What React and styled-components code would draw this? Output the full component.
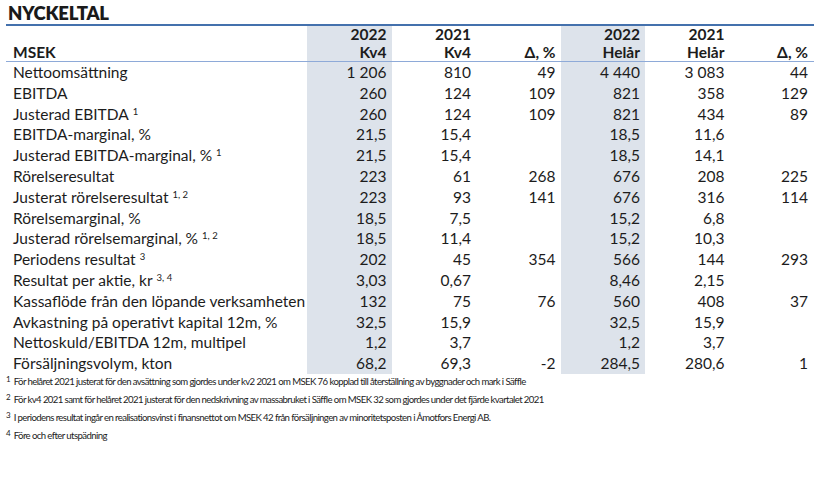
import React from "react";
import styled, { createGlobalStyle } from "styled-components";

const GlobalStyle = createGlobalStyle`
  html, body {
    margin: 0;
    padding: 0;
    background: #ffffff;
  }
  body {
    font-family: Lato, "Liberation Sans", sans-serif;
    color: #1c1c1c;
  }
`;

const Page = styled.div`
  width: 820px;
  height: 489px;
  padding: 3px 6px 0 6px;
  box-sizing: border-box;
`;

const Title = styled.h1`
  margin: 0 0 0 2px;
  font-size: 18.5px;
  font-weight: 800;
  line-height: 21px;
  letter-spacing: -0.2px;
  color: #1a1a1a;
`;

const Table = styled.table`
  width: 808px;
  border-collapse: collapse;
  table-layout: fixed;
  border-top: 2px solid #4471ad;
  font-size: 15.5px;
`;

const HeadCell = styled.th`
  padding: 0 ${(p) => (p.$last ? "6px" : "5px")} 0 ${(p) => (p.$label ? "7px" : "0")};
  height: ${(p) => (p.$bottom ? "18px" : "17px")};
  line-height: ${(p) => (p.$bottom ? "18px" : "17px")};
  vertical-align: ${(p) => (p.$bottom ? "top" : "bottom")};
  font-weight: 700;
  text-align: ${(p) => (p.$label ? "left" : "right")};
  background: ${(p) => (p.$shade ? "#dde3eb" : "transparent")};
  border-bottom: ${(p) => (p.$bottom ? "1px solid #8eaad8" : "none")};
  white-space: nowrap;
`;

const Cell = styled.td`
  padding: 0 ${(p) => (p.$last ? "6px" : "5px")} 0 ${(p) => (p.$label ? "7px" : "0")};
  height: 20.8px;
  line-height: 20.8px;
  text-align: ${(p) => (p.$label ? "left" : "right")};
  background: ${(p) => (p.$shade ? "#dde3eb" : "transparent")};
  white-space: nowrap;
`;

const Sup = styled.span`
  position: relative;
  top: -5px;
  font-size: 9.5px;
  line-height: 0;
  margin-left: 4px;
`;

const Notes = styled.div`
  margin-top: -1px;
  font-size: 9.6px;
  letter-spacing: -0.6px;
  color: #222;
`;

const Note = styled.div`
  height: 18px;
  line-height: 18px;
  white-space: nowrap;
`;

const NoteMark = styled.span`
  position: relative;
  top: -3px;
  font-size: 8px;
  line-height: 0;
  letter-spacing: 0;
  margin-right: 3px;
`;

const rows = [
  ["Nettoomsättning", null, "1 206", "810", "49", "4 440", "3 083", "44"],
  ["EBITDA", null, "260", "124", "109", "821", "358", "129"],
  ["Justerad EBITDA", "1", "260", "124", "109", "821", "434", "89"],
  ["EBITDA-marginal, %", null, "21,5", "15,4", "", "18,5", "11,6", ""],
  ["Justerad EBITDA-marginal, %", "1", "21,5", "15,4", "", "18,5", "14,1", ""],
  ["Rörelseresultat", null, "223", "61", "268", "676", "208", "225"],
  ["Justerat rörelseresultat", "1, 2", "223", "93", "141", "676", "316", "114"],
  ["Rörelsemarginal, %", null, "18,5", "7,5", "", "15,2", "6,8", ""],
  ["Justerad rörelsemarginal, %", "1, 2", "18,5", "11,4", "", "15,2", "10,3", ""],
  ["Periodens resultat", "3", "202", "45", "354", "566", "144", "293"],
  ["Resultat per aktie, kr", "3, 4", "3,03", "0,67", "", "8,46", "2,15", ""],
  ["Kassaflöde från den löpande verksamheten", null, "132", "75", "76", "560", "408", "37"],
  ["Avkastning på operativt kapital 12m, %", null, "32,5", "15,9", "", "32,5", "15,9", ""],
  ["Nettoskuld/EBITDA 12m, multipel", null, "1,2", "3,7", "", "1,2", "3,7", ""],
  ["Försäljningsvolym, kton", null, "68,2", "69,3", "-2", "284,5", "280,6", "1"],
];

const notes = [
  ["1", "För helåret 2021 justerat för den avsättning som gjordes under kv2 2021 om MSEK 76 kopplad till återställning av byggnader och mark i Säffle"],
  ["2", "För kv4 2021 samt för helåret 2021 justerat för den nedskrivning av massabruket i Säffle om MSEK 32 som gjordes under det fjärde kvartalet 2021"],
  ["3", "I periodens resultat ingår en realisationsvinst i finansnettot om MSEK 42 från försäljningen av minoritetsposten i Åmotfors Energi AB."],
  ["4", "Före och efter utspädning"],
];

const shaded = [true, false, false, true, false, false];

export default function App() {
  return (
    <Page>
      <GlobalStyle />
      <Title>NYCKELTAL</Title>
      <Table>
        <colgroup>
          <col style={{ width: "301px" }} />
          <col style={{ width: "84.5px" }} />
          <col style={{ width: "84.5px" }} />
          <col style={{ width: "84.5px" }} />
          <col style={{ width: "84.5px" }} />
          <col style={{ width: "84.5px" }} />
          <col style={{ width: "84.5px" }} />
        </colgroup>
        <thead>
          <tr>
            <HeadCell $label />
            <HeadCell $shade>2022</HeadCell>
            <HeadCell>2021</HeadCell>
            <HeadCell />
            <HeadCell $shade>2022</HeadCell>
            <HeadCell>2021</HeadCell>
            <HeadCell $last />
          </tr>
          <tr>
            <HeadCell $label $bottom>MSEK</HeadCell>
            <HeadCell $shade $bottom>Kv4</HeadCell>
            <HeadCell $bottom>Kv4</HeadCell>
            <HeadCell $bottom>Δ, %</HeadCell>
            <HeadCell $shade $bottom>Helår</HeadCell>
            <HeadCell $bottom>Helår</HeadCell>
            <HeadCell $bottom $last>Δ, %</HeadCell>
          </tr>
        </thead>
        <tbody>
          {rows.map(([label, sup, ...vals]) => (
            <tr key={label}>
              <Cell $label>
                {label}
                {sup && <Sup>{sup}</Sup>}
              </Cell>
              {vals.map((v, i) => (
                <Cell key={i} $shade={shaded[i]} $last={i === 5}>
                  {v}
                </Cell>
              ))}
            </tr>
          ))}
        </tbody>
      </Table>
      <Notes>
        {notes.map(([n, text]) => (
          <Note key={n}>
            <NoteMark>{n}</NoteMark>
            {text}
          </Note>
        ))}
      </Notes>
    </Page>
  );
}
